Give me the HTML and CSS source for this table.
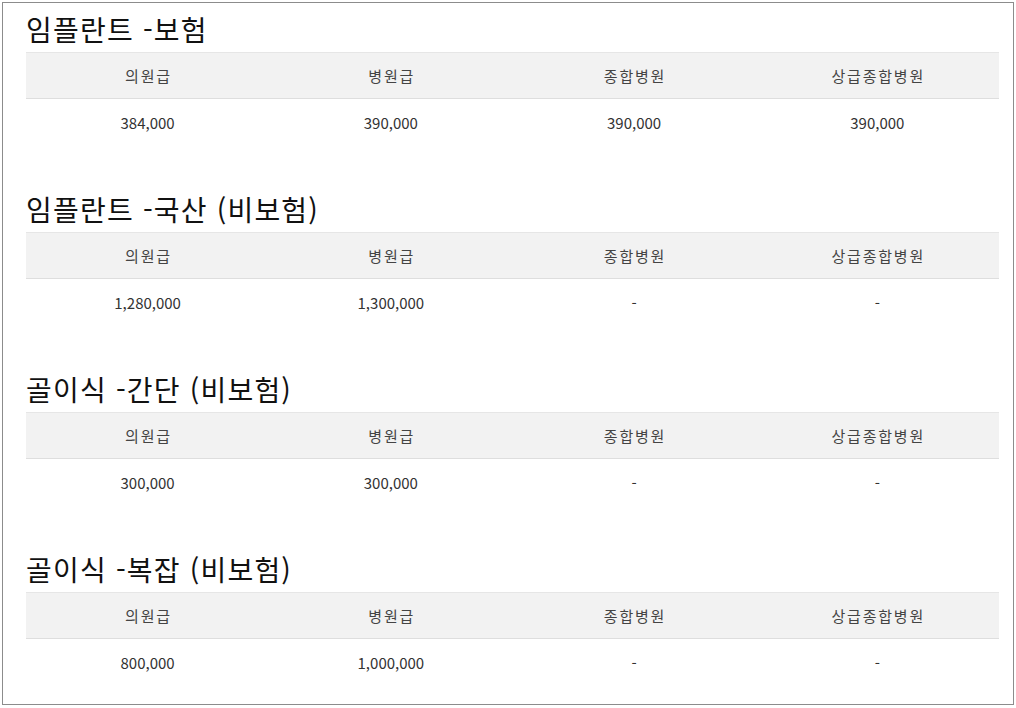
FILE: index.html
```html
<!DOCTYPE html>
<html lang="ko">
<head>
<meta charset="utf-8">
<link rel="stylesheet" href="styles.css">
</head>
<body>
<div class="page">
  <section class="section">
    <h2 class="title">임플란트 -보험</h2>
    <div class="table">
      <div class="row head"><div>의원급</div><div>병원급</div><div>종합병원</div><div>상급종합병원</div></div>
      <div class="row body"><div>384,000</div><div>390,000</div><div>390,000</div><div>390,000</div></div>
    </div>
  </section>
  <section class="section">
    <h2 class="title">임플란트 -국산 (비보험)</h2>
    <div class="table">
      <div class="row head"><div>의원급</div><div>병원급</div><div>종합병원</div><div>상급종합병원</div></div>
      <div class="row body"><div>1,280,000</div><div>1,300,000</div><div>-</div><div>-</div></div>
    </div>
  </section>
  <section class="section">
    <h2 class="title">골이식 -간단 (비보험)</h2>
    <div class="table">
      <div class="row head"><div>의원급</div><div>병원급</div><div>종합병원</div><div>상급종합병원</div></div>
      <div class="row body"><div>300,000</div><div>300,000</div><div>-</div><div>-</div></div>
    </div>
  </section>
  <section class="section">
    <h2 class="title">골이식 -복잡 (비보험)</h2>
    <div class="table">
      <div class="row head"><div>의원급</div><div>병원급</div><div>종합병원</div><div>상급종합병원</div></div>
      <div class="row body"><div>800,000</div><div>1,000,000</div><div>-</div><div>-</div></div>
    </div>
  </section>
</div>
</body>
</html>
```
FILE: styles.css
```css
html, body {
  margin: 0;
  padding: 0;
  background: #fff;
}
body {
  font-family: "Noto Sans CJK KR", "Noto Sans", sans-serif;
  color: #333;
}
.page {
  margin: 2px;
  height: 703px;
  box-sizing: border-box;
  border: 1px solid #8c8c8c;
  padding: 8px 14px 0 23px;
}
.section + .section {
  margin-top: 46px;
}
.title {
  margin: 0 0 5px 0;
  font-size: 28px;
  letter-spacing: 1.2px;
  font-weight: 400;
  line-height: 36px;
  color: #111;
}
.table {
  display: flex;
  flex-direction: column;
}
.row {
  display: grid;
  grid-template-columns: repeat(4, 1fr);
  font-size: 15px;
  text-align: center;
}
.row > div {
  display: flex;
  align-items: center;
  justify-content: center;
}
.head {
  background: #f2f2f2;
  border-top: 1px solid #e6e6e6;
  border-bottom: 1px solid #dedede;
  height: 45px;
  color: #444;
  letter-spacing: 1.8px;
}
.head > div {
  padding-left: 1.8px;
}
.body {
  height: 46px;
  color: #333;
}
```
